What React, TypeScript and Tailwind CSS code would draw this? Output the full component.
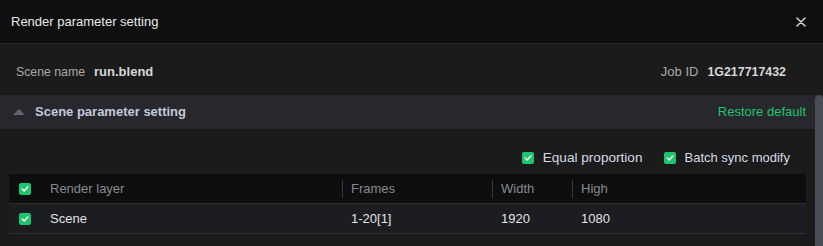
import React from 'react';

const Check: React.FC = () => (
  <span className="w-3 h-3 rounded-[2px] bg-[#1fc46e] flex items-center justify-center shrink-0">
    <svg width="8" height="8" viewBox="0 0 8 8" fill="none">
      <path d="M1.2 4.1 L3.2 6 L6.8 2" stroke="#ffffff" strokeWidth="1.4" strokeLinecap="round" strokeLinejoin="round" />
    </svg>
  </span>
);

const Sep: React.FC = () => <span className="w-px h-[18px] bg-[#36373c] shrink-0" />;

const App: React.FC = () => {
  const rows = [{ layer: 'Scene', frames: '1-20[1]', width: '1920', high: '1080' }];

  return (
    <div className="w-[823px] h-[246px] flex flex-col bg-[#1b1b1c] overflow-hidden font-['Liberation_Sans',Arial,sans-serif] text-[13px]">
      {/* Title bar */}
      <div className="h-[44px] flex items-center justify-between pl-[11px] pr-[17px] bg-[#0f0f10] border-b border-[#2a2b30] shrink-0">
        <span className="text-[#e8e8e8]">Render parameter setting</span>
        <svg width="10" height="10" viewBox="0 0 10 10">
          <path d="M1 1 L9 9 M9 1 L1 9" stroke="#d6d6d6" strokeWidth="1.5" strokeLinecap="round" />
        </svg>
      </div>

      {/* Scene / job info */}
      <div className="h-[51px] flex items-center justify-between pl-4 pr-[37px] pt-[5px] shrink-0">
        <div className="flex items-center gap-[9px]">
          <span className="text-[12.3px] text-[#a9a9ab]">Scene name</span>
          <span className="font-bold text-[#d6d6d8]">run.blend</span>
        </div>
        <div className="flex items-center gap-[9px]">
          <span className="text-[#a9a9ab]">Job ID</span>
          <span className="font-bold text-[12.4px] text-[#d6d6d8]">1G217717432</span>
        </div>
      </div>

      {/* Scroll area */}
      <div className="flex-1 flex min-h-0">
        <div className="flex-1 flex flex-col">
          {/* Section header */}
          <div className="h-[34px] flex items-center justify-between bg-[#27282d] pl-[13px] pr-[9px] shrink-0">
            <div className="flex items-center gap-[10px]">
              <svg width="12" height="6" viewBox="0 0 12 6">
                <path d="M6 0 L12 6 L0 6 Z" fill="#62646c" />
              </svg>
              <span className="font-bold text-[#c3c9d6]">Scene parameter setting</span>
            </div>
            <span className="text-[#1fc36f]">Restore default</span>
          </div>

          {/* Options */}
          <div className="h-[45px] flex items-center justify-end gap-[21px] pr-[25px] pt-[13px] shrink-0">
            <div className="flex items-center gap-[9px]">
              <Check />
              <span className="text-[13.6px] text-[#d4dae5]">Equal proportion</span>
            </div>
            <div className="flex items-center gap-[9px]">
              <Check />
              <span className="text-[#d4dae5]">Batch sync modify</span>
            </div>
          </div>

          {/* Table */}
          <div className="mx-[9px] flex flex-col">
            <div className="h-[30px] flex items-center bg-[#0e0e0f] border-b border-[#2c2d31] text-[#878a90]">
              <div className="w-[333px] flex items-center pl-[10px]">
                <Check />
                <span className="ml-[10px]"><Sep /></span>
                <span className="ml-[9px]">Render layer</span>
              </div>
              <div className="w-[150px] flex items-center">
                <Sep />
                <span className="ml-[8px]">Frames</span>
              </div>
              <div className="w-[80px] flex items-center">
                <Sep />
                <span className="ml-[8px]">Width</span>
              </div>
              <div className="flex-1 flex items-center">
                <Sep />
                <span className="ml-[8px]">High</span>
              </div>
            </div>
            {rows.map(r => (
              <div key={r.layer} className="h-[30px] flex items-center bg-[#1c1d21] border-b border-[#2e2f33] text-[#e2e2e4]">
                <div className="w-[333px] flex items-center pl-[10px]">
                  <Check />
                  <span className="ml-[19px]">{r.layer}</span>
                </div>
                <div className="w-[150px] pl-[9px]">{r.frames}</div>
                <div className="w-[80px] pl-[9px]">{r.width}</div>
                <div className="flex-1 pl-[9px]">{r.high}</div>
              </div>
            ))}
          </div>
        </div>
        {/* Scrollbar */}
        <div className="w-[8px] bg-[#4a4c56] rounded-t-[4px] shrink-0" />
      </div>
    </div>
  );
};

export default App;
